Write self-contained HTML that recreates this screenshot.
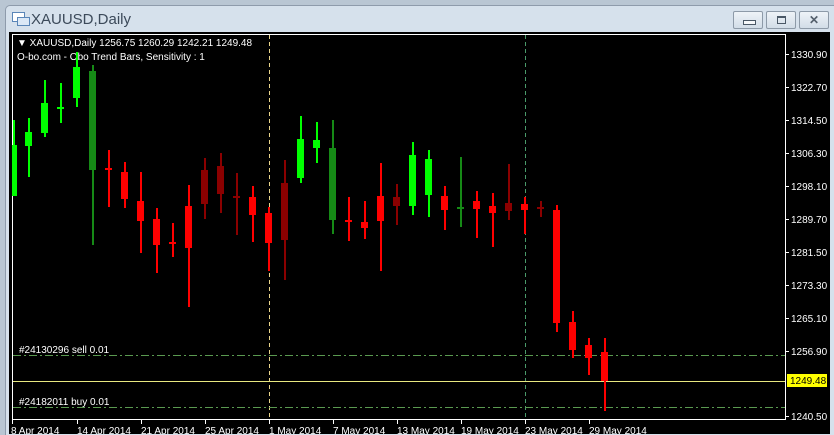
<!DOCTYPE html>
<html><head><meta charset="utf-8"><style>
html,body{margin:0;padding:0;width:834px;height:434px;overflow:hidden;background:#b9c6d3;}
.win{position:absolute;left:5px;top:5px;width:829px;height:429px;background:#d6e1ec;border-top-left-radius:5px;border:1px solid #8e9bab;border-right:none;border-bottom:none;}
.t{position:absolute;font:15px "Liberation Sans",sans-serif;color:#3c4a5a;}
.btn{position:absolute;top:5px;width:28px;height:16px;border:1px solid #8d9aa8;border-radius:2px;background:linear-gradient(#eef3f8,#d2dde8);}
svg{position:absolute;left:0;top:0;}
</style></head><body>
<div class="win">
<svg width="20" height="16" style="left:5px;top:5px;position:absolute"><rect x="1.5" y="1.5" width="12" height="9" fill="#fff" stroke="#5a86b8"/><rect x="6.5" y="6.5" width="12" height="8" fill="#dbe8f6" stroke="#5a86b8"/></svg>
<div class="t" style="left:25px;top:5px">XAUUSD,Daily</div>
<div class="btn" style="left:727px"><div style="position:absolute;left:9px;top:8px;width:11px;height:3px;background:#f6f8fa;border:1px solid #4a5866"></div></div>
<div class="btn" style="left:760px"><div style="position:absolute;left:10px;top:4px;width:7px;height:5px;border:1px solid #4a5866;border-top-width:2px"></div></div>
<div class="btn" style="left:793px;font:bold 12px 'Liberation Sans',sans-serif;color:#55606c;text-align:center;line-height:16px">✕</div>
</div>
<svg width="834" height="434" font-family="Liberation Sans, sans-serif" font-size="10">
<rect x="9" y="32" width="821" height="402" fill="#000"/>
<rect x="12.5" y="34.5" width="773" height="385" fill="none" stroke="#fff"/>
<line x1="269.5" y1="35" x2="269.5" y2="419" stroke="#e8d48a" stroke-dasharray="4,3"/>
<line x1="525.5" y1="35" x2="525.5" y2="419" stroke="#4a9a6a" stroke-dasharray="4,3"/>
<line x1="13" y1="355.5" x2="785" y2="355.5" stroke="#5a9a50" stroke-dasharray="8,3,2,3"/>
<line x1="13" y1="407.5" x2="785" y2="407.5" stroke="#5a9a50" stroke-dasharray="8,3,2,3"/>
<line x1="13" y1="381.5" x2="785" y2="381.5" stroke="#e8e880"/>
<g fill="#fff">
<text x="17" y="46">▼ XAUUSD,Daily  1256.75 1260.29 1242.21 1249.48</text>
<text x="17" y="60">O-bo.com - Obo Trend Bars, Sensitivity : 1</text>
<text x="19" y="353">#24130296 sell 0.01</text>
<text x="19" y="405">#24182011 buy 0.01</text>
</g>
<g fill="#fff" font-size="10">
<text x="791" y="58">1330.90</text><text x="791" y="91">1322.70</text><text x="791" y="124">1314.50</text><text x="791" y="157">1306.30</text><text x="791" y="190">1298.10</text><text x="791" y="223">1289.70</text><text x="791" y="256">1281.50</text><text x="791" y="289">1273.30</text><text x="791" y="322">1265.10</text><text x="791" y="355">1256.90</text><text x="791" y="420">1240.50</text>
</g>
<g stroke="#fff"><line x1="786" y1="54.5" x2="789" y2="54.5"/><line x1="786" y1="87.5" x2="789" y2="87.5"/><line x1="786" y1="120.5" x2="789" y2="120.5"/><line x1="786" y1="153.5" x2="789" y2="153.5"/><line x1="786" y1="186.5" x2="789" y2="186.5"/><line x1="786" y1="219.5" x2="789" y2="219.5"/><line x1="786" y1="252.5" x2="789" y2="252.5"/><line x1="786" y1="285.5" x2="789" y2="285.5"/><line x1="786" y1="318.5" x2="789" y2="318.5"/><line x1="786" y1="351.5" x2="789" y2="351.5"/><line x1="786" y1="416.5" x2="789" y2="416.5"/></g>
<rect x="787" y="374" width="40" height="13" fill="#ffff00"/>
<text x="790" y="384" fill="#000">1249.48</text>
<g stroke="#fff"><line x1="12.5" y1="420" x2="12.5" y2="424"/><line x1="77.5" y1="420" x2="77.5" y2="424"/><line x1="141.5" y1="420" x2="141.5" y2="424"/><line x1="205.5" y1="420" x2="205.5" y2="424"/><line x1="269.5" y1="420" x2="269.5" y2="424"/><line x1="333.5" y1="420" x2="333.5" y2="424"/><line x1="397.5" y1="420" x2="397.5" y2="424"/><line x1="461.5" y1="420" x2="461.5" y2="424"/><line x1="525.5" y1="420" x2="525.5" y2="424"/><line x1="589.5" y1="420" x2="589.5" y2="424"/></g>
<g fill="#fff"><text x="11" y="434">8 Apr 2014</text><text x="77" y="434">14 Apr 2014</text><text x="141" y="434">21 Apr 2014</text><text x="205" y="434">25 Apr 2014</text><text x="269" y="434">1 May 2014</text><text x="333" y="434">7 May 2014</text><text x="397" y="434">13 May 2014</text><text x="461" y="434">19 May 2014</text><text x="525" y="434">23 May 2014</text><text x="589" y="434">29 May 2014</text></g>
<g>
<g fill="#00ff00">
<rect x="13" y="120" width="2" height="76"/><rect x="12" y="145" width="5" height="51"/>
<rect x="28" y="118" width="2" height="59"/><rect x="25" y="132" width="7" height="14"/>
<rect x="44" y="80" width="2" height="57"/><rect x="41" y="103" width="7" height="30"/>
<rect x="60" y="83" width="2" height="40"/><rect x="57" y="107" width="7" height="2"/>
<rect x="76" y="52" width="2" height="55"/><rect x="73" y="67" width="7" height="31"/>
<rect x="300" y="116" width="2" height="67"/><rect x="297" y="139" width="7" height="39"/>
<rect x="316" y="122" width="2" height="41"/><rect x="313" y="140" width="7" height="8"/>
<rect x="412" y="142" width="2" height="73"/><rect x="409" y="155" width="7" height="51"/>
<rect x="428" y="150" width="2" height="67"/><rect x="425" y="159" width="7" height="36"/>
</g>
<g fill="#168a16">
<rect x="92" y="65" width="2" height="180"/><rect x="89" y="71" width="7" height="99"/>
<rect x="332" y="120" width="2" height="114"/><rect x="329" y="148" width="7" height="72"/>
<rect x="460" y="157" width="2" height="70"/><rect x="457" y="207" width="7" height="2"/>
</g>
<g fill="#ff0000">
<rect x="108" y="150" width="2" height="57"/><rect x="105" y="168" width="7" height="2"/>
<rect x="124" y="162" width="2" height="46"/><rect x="121" y="172" width="7" height="27"/>
<rect x="140" y="172" width="2" height="81"/><rect x="137" y="201" width="7" height="20"/>
<rect x="156" y="208" width="2" height="65"/><rect x="153" y="219" width="7" height="26"/>
<rect x="172" y="223" width="2" height="34"/><rect x="169" y="242" width="7" height="2"/>
<rect x="188" y="185" width="2" height="122"/><rect x="185" y="206" width="7" height="42"/>
<rect x="252" y="186" width="2" height="56"/><rect x="249" y="197" width="7" height="18"/>
<rect x="268" y="207" width="2" height="64"/><rect x="265" y="213" width="7" height="30"/>
<rect x="348" y="197" width="2" height="44"/><rect x="345" y="220" width="7" height="2"/>
<rect x="364" y="201" width="2" height="38"/><rect x="361" y="222" width="7" height="6"/>
<rect x="380" y="163" width="2" height="108"/><rect x="377" y="196" width="7" height="25"/>
<rect x="444" y="186" width="2" height="44"/><rect x="441" y="196" width="7" height="14"/>
<rect x="476" y="191" width="2" height="47"/><rect x="473" y="201" width="7" height="8"/>
<rect x="492" y="193" width="2" height="54"/><rect x="489" y="206" width="7" height="7"/>
<rect x="524" y="197" width="2" height="37"/><rect x="521" y="204" width="7" height="6"/>
<rect x="556" y="205" width="2" height="127"/><rect x="553" y="210" width="7" height="113"/>
<rect x="572" y="311" width="2" height="47"/><rect x="569" y="322" width="7" height="28"/>
<rect x="588" y="338" width="2" height="37"/><rect x="585" y="345" width="7" height="13"/>
<rect x="604" y="338" width="2" height="73"/><rect x="601" y="352" width="7" height="29"/>
</g>
<g fill="#8b0000">
<rect x="204" y="158" width="2" height="61"/><rect x="201" y="170" width="7" height="34"/>
<rect x="220" y="153" width="2" height="60"/><rect x="217" y="166" width="7" height="28"/>
<rect x="236" y="173" width="2" height="62"/><rect x="233" y="196" width="7" height="2"/>
<rect x="284" y="160" width="2" height="120"/><rect x="281" y="183" width="7" height="57"/>
<rect x="396" y="184" width="2" height="41"/><rect x="393" y="197" width="7" height="9"/>
<rect x="508" y="164" width="2" height="56"/><rect x="505" y="203" width="7" height="8"/>
<rect x="540" y="201" width="2" height="16"/><rect x="537" y="207" width="7" height="2"/>
</g>
</g>
</svg>
</body></html>
